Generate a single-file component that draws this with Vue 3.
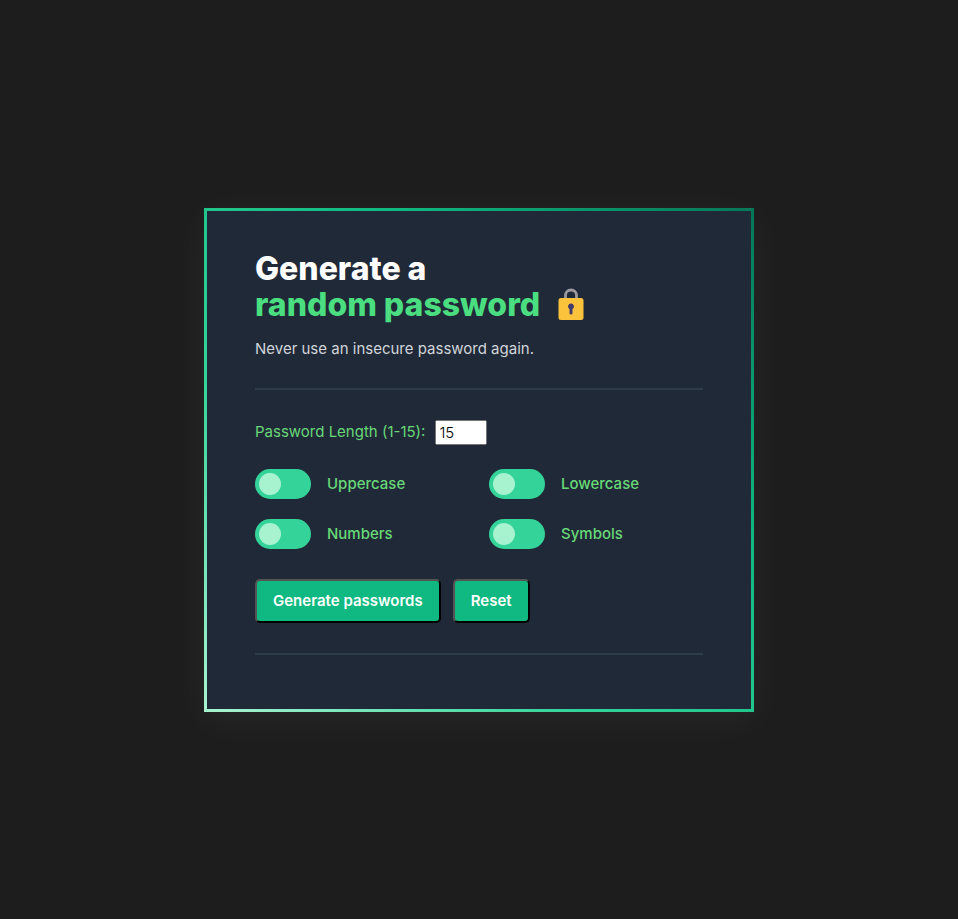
<script setup>
import { ref, reactive } from 'vue'

const length = ref(15)
const options = reactive([
  { id: 'uppercase', label: 'Uppercase', on: false },
  { id: 'lowercase', label: 'Lowercase', on: false },
  { id: 'numbers', label: 'Numbers', on: false },
  { id: 'symbols', label: 'Symbols', on: false },
])
const sets = {
  uppercase: 'ABCDEFGHIJKLMNOPQRSTUVWXYZ',
  lowercase: 'abcdefghijklmnopqrstuvwxyz',
  numbers: '0123456789',
  symbols: '!@#$%^&*()-_=+[]{}',
}
const passwords = ref([])

function generate() {
  const chars = options.filter((o) => o.on).map((o) => sets[o.id]).join('')
  if (!chars) return
  const make = () =>
    Array.from({ length: length.value }, () => chars[Math.floor(Math.random() * chars.length)]).join('')
  passwords.value = [make(), make()]
}

function reset() {
  length.value = 15
  options.forEach((o) => (o.on = false))
  passwords.value = []
}
</script>

<template>
  <main class="page">
    <form class="card" @submit.prevent="generate" @reset.prevent="reset">
      <h1 class="title">
        Generate a
        <span class="accent">
          random password
          <svg class="lock" viewBox="0 0 26 34" aria-hidden="true">
            <path d="M7.500 12V7.500a5.500 5.500 0 0 1 11 0V12" fill="none" stroke="#9b9b9f" stroke-width="2.800" />
            <rect x="0.500" y="10" width="25" height="22" rx="2.500" fill="#fbc23c" />
            <path d="M13 15.500a3 3 0 0 0-1.500 5.600V25a1.500 1.500 0 0 0 3 0v-3.900A3 3 0 0 0 13 15.500z" fill="#433b6b" />
          </svg>
        </span>
      </h1>
      <p class="subtitle">Never use an insecure password again.</p>
      <hr class="rule" />
      <div class="length">
        <label for="length">Password Length (1-15):</label>
        <input id="length" v-model.number="length" class="number" type="number" min="1" max="15" />
      </div>
      <div class="options">
        <div v-for="o in options" :key="o.id" class="option">
          <input :id="o.id" v-model="o.on" class="toggle" type="checkbox" />
          <label :for="o.id">{{ o.label }}</label>
        </div>
      </div>
      <div class="actions">
        <button class="button" type="submit">Generate passwords</button>
        <button class="button" type="reset">Reset</button>
      </div>
      <hr class="rule" />
      <div v-if="passwords.length" class="results">
        <output v-for="p in passwords" :key="p">{{ p }}</output>
      </div>
    </form>
  </main>
</template>

<style>
body {
  margin: 0;
  background: #1d1d1d;
}
</style>

<style scoped>
.page {
  box-sizing: border-box;
  min-height: 100vh;
  display: flex;
  align-items: center;
  justify-content: center;
  padding: 16px;
  font-family: Inter, sans-serif;
  font-size: 15px;
  line-height: 24px;
}
.card {
  box-sizing: border-box;
  width: 100%;
  max-width: 550px;
  padding: 40px 48px 54px;
  border: 3px solid;
  border-image: linear-gradient(to top right, #a7f3d0, #34d399, #10b981, #047857) 1;
  background: #202937;
  box-shadow: 0 8px 40px rgba(255, 255, 255, 0.05);
}
.title {
  margin: 0;
  color: #fff;
  font-size: 32px;
  font-weight: 800;
  line-height: 36px;
}
.accent {
  display: flex;
  align-items: center;
  gap: 18px;
  color: #4ade80;
}
.lock {
  width: 26px;
  height: 34px;
}
.subtitle {
  margin: 14px 0 27px;
  color: #d1d5db;
}
.rule {
  height: 2px;
  margin: 0;
  border: 0;
  background: #2d3b4b;
}
.length {
  display: flex;
  align-items: center;
  gap: 10px;
  margin: 30px 0 24px;
  color: #68d878;
}
.number {
  box-sizing: border-box;
  width: 52px;
  height: 25px;
  font: inherit;
  font-weight: 300;
}
.options {
  display: grid;
  grid-template-columns: 1fr 1fr;
  gap: 20px;
}
.option {
  display: flex;
  align-items: center;
  gap: 16px;
  color: #68d878;
  font-weight: 500;
}
.toggle {
  appearance: none;
  box-sizing: border-box;
  flex: none;
  width: 56px;
  height: 30px;
  margin: 0;
  padding: 4px;
  border-radius: 15px;
  background: #34d399;
  cursor: pointer;
}
.toggle::before {
  content: '';
  display: block;
  width: 22px;
  height: 22px;
  border-radius: 50%;
  background: #a7f3d0;
}
.toggle:checked::before {
  margin-left: auto;
}
.actions {
  display: flex;
  flex-wrap: wrap;
  gap: 12px;
  margin: 30px 0;
}
.button {
  padding: 8px 16px;
  border: 2px outset #000;
  border-radius: 5px;
  background: #10b981;
  color: #fff;
  font: inherit;
  font-weight: 600;
  cursor: pointer;
}
.results {
  display: grid;
  grid-template-columns: 1fr 1fr;
  gap: 20px;
  margin-top: 24px;
  color: #4ade80;
}
</style>
